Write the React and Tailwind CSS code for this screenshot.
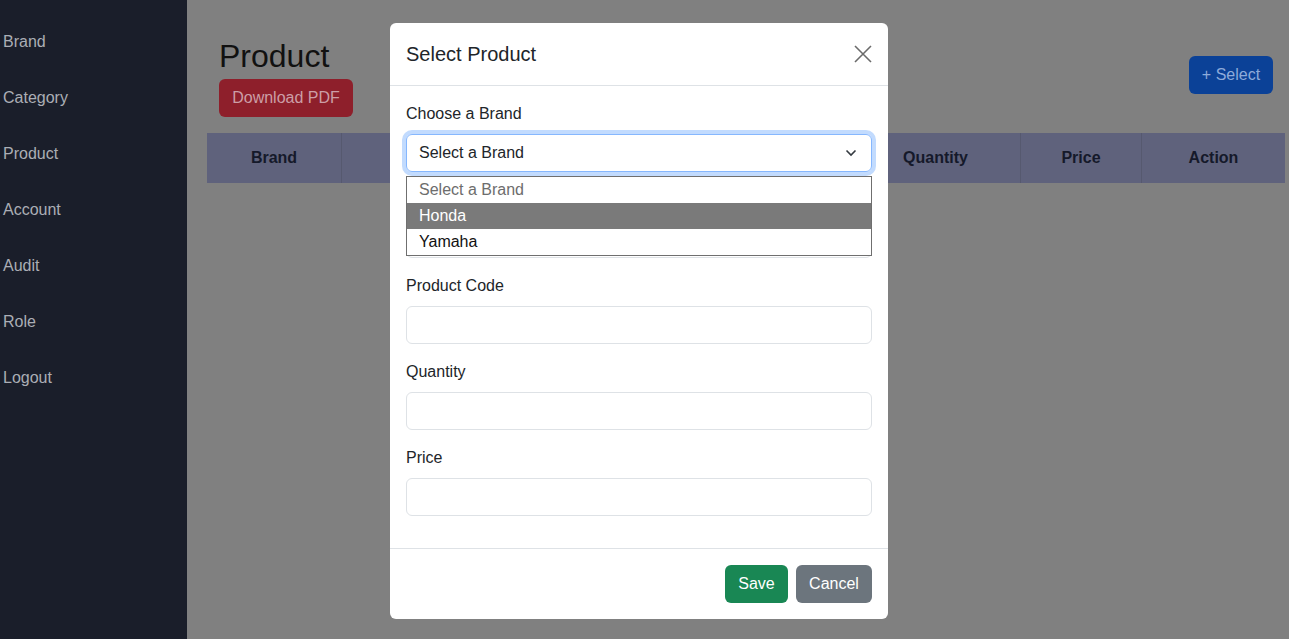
import { useState } from "react";

const menu = ["Brand", "Category", "Product", "Account", "Audit", "Role", "Logout"];
const columns = ["Brand", "Category", "Product Name", "Product Code", "Quantity", "Price", "Action"];

const Field = ({ label, children }) => (
  <div className="mb-4">
    <label className="block mb-2 h-6 text-[16px] leading-6 text-[#212529]">{label}</label>
    {children}
  </div>
);

const App = () => {
  const [brand] = useState("Honda");

  return (
    <div className="flex h-[639px] w-full overflow-hidden bg-[#808080] font-['Liberation_Sans',Arial,sans-serif]">
      <aside className="w-[187px] shrink-0 bg-[#1a1e2a] pt-[30px]">
        {menu.map((m) => (
          <div key={m} className="h-[56px] pl-[3px] text-[16px] leading-6 text-[#abaeb5]">
            {m}
          </div>
        ))}
      </aside>

      <main className="flex-1 pt-[37px] pl-[20px] pr-[4px]">
        <div className="flex items-center justify-between pl-[12px] pr-[12px]">
          <div>
            <h2 className="text-[32px] leading-[38px] text-[#111]">Product</h2>
            <button className="mt-[4px] h-[38px] w-[134px] rounded-md bg-[#8e1f2b] text-[16px] text-[#cc9ea6]">
              Download PDF
            </button>
          </div>
          <button className="mb-[4px] h-[38px] w-[84px] rounded-md bg-[#0b4197] text-[16px] text-[#8eabda]">
            + Select
          </button>
        </div>

        <div className="mt-[16px] grid grid-cols-[135px_170px_170px_169px_170px_121px_143px] bg-[#5f627c]">
          {columns.map((c, i) => (
            <div
              key={c}
              className={`flex h-[50px] items-center justify-center text-[16px] font-bold text-[#15192a] ${
                i < columns.length - 1 ? "border-r border-[#56596f]" : ""
              }`}
            >
              {c}
            </div>
          ))}
        </div>
      </main>

      <div className="fixed left-[390px] top-[23px] w-[498px] rounded-md bg-white">
        <div className="flex h-[63px] items-center justify-between border-b border-[#dee2e6] px-4">
          <h5 className="text-[20px] leading-[30px] text-[#212529]">Select Product</h5>
          <svg width="20" height="20" viewBox="0 0 20 20" className="mr-[-1px]">
            <path d="M2 2 L18 18 M18 2 L2 18" stroke="#6b6b6b" strokeWidth="1.6" />
          </svg>
        </div>

        <div className="px-4 pt-4 pb-4">
          <Field label="Choose a Brand">
            <div className="relative">
              <div className="flex h-[38px] items-center justify-between rounded-md border border-[#86b7fe] pl-3 pr-[14px] text-[16px] text-[#212529] shadow-[0_0_0_4px_rgba(13,110,253,0.25)]">
                Select a Brand
                <svg width="12" height="8" viewBox="0 0 12 8">
                  <path d="M1.5 1.5 L6 6 L10.5 1.5" fill="none" stroke="#343a40" strokeWidth="1.6" />
                </svg>
              </div>
              <div className="absolute left-0 right-0 top-[42px] z-10 border border-[#6f6f6f] bg-white text-[16px]">
                <div className="h-[26px] pl-3 leading-[26px] text-[#6d6d6d]">Select a Brand</div>
                <div
                  className={`h-[26px] pl-3 leading-[26px] ${
                    brand === "Honda" ? "bg-[#7a7a7a] text-white" : "text-[#111]"
                  }`}
                >
                  Honda
                </div>
                <div className="h-[26px] pl-3 leading-[26px] text-[#111]">Yamaha</div>
              </div>
            </div>
          </Field>
          {/* field hidden behind the open dropdown */}
          <Field label="">
            <div className="h-[38px] rounded-md border border-[#dee2e6]" />
          </Field>
          <Field label="Product Code">
            <div className="h-[38px] rounded-md border border-[#dee2e6]" />
          </Field>
          <Field label="Quantity">
            <div className="h-[38px] rounded-md border border-[#dee2e6]" />
          </Field>
          <Field label="Price">
            <div className="h-[38px] rounded-md border border-[#dee2e6]" />
          </Field>
        </div>

        <div className="flex justify-end gap-2 border-t border-[#dee2e6] p-4">
          <button className="h-[38px] w-[63px] rounded-md bg-[#198754] text-[16px] text-white">Save</button>
          <button className="h-[38px] w-[76px] rounded-md bg-[#6c757d] text-[16px] text-white">Cancel</button>
        </div>
      </div>
    </div>
  );
};

export default App;
